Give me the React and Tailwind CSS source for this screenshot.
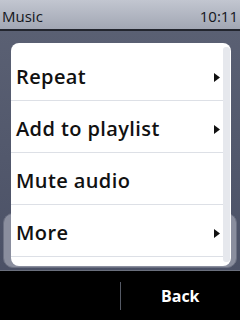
import { useState } from "react";

const items = [
  { label: "Repeat", sub: true },
  { label: "Add to playlist", sub: true },
  { label: "Mute audio", sub: false },
  { label: "More", sub: true },
];

const Arrow = () => (
  <svg width="6" height="9" viewBox="0 0 6 9">
    <path d="M0 0 L6 4.5 L0 9 Z" fill="#111" />
  </svg>
);

const App = () => {
  const [active] = useState(null);

  return (
    <div
      className="w-[240px] h-[320px] flex flex-col overflow-hidden bg-[#535a6d]"
      style={{ fontFamily: '"Open Sans", sans-serif' }}
    >
      {/* STATUS BAR */}
      <div className="h-[29px] shrink-0 flex items-center justify-between px-[2px] pt-[3px] bg-gradient-to-b from-[#c2c6d0] to-[#a2a7b4] text-[#14161c] text-[15px]">
        <span>Music</span>
        <span>10:11</span>
      </div>
      <div className="h-[2px] shrink-0 bg-[#22252e]" />

      {/* CONTENT */}
      <div className="relative flex-1 bg-gradient-to-b from-[#5a6073] to-[#4b5166]">
        {/* frame behind bottom of menu */}
        <div className="absolute left-[3px] right-[3px] top-[182px] bottom-[2px] rounded-[10px] bg-[#8a8e9e] border border-[#6b7082]" />

        <div className="absolute left-[11px] top-[12px] w-[220px] h-[223px] rounded-[8px] bg-white flex">
          <div className="flex-1 flex flex-col pt-[6px]">
            {items.map((it, i) => (
              <div
                key={it.label}
                className={`h-[52px] flex items-center justify-between pt-[5px] pl-[5px] pr-[3px] border-b border-[#dde0e6] ${active === i ? "bg-gray-100" : ""}`}
              >
                <span className="text-[20px] font-semibold text-[#111] tracking-[0.4px]">
                  {it.label}
                </span>
                {it.sub && <Arrow />}
              </div>
            ))}
          </div>
          <div className="w-[7px] my-[4px] mr-[1px] rounded-[3px] bg-[#e6e8ed]" />
        </div>
      </div>

      {/* SOFTKEYS */}
      <div className="h-[50px] shrink-0 bg-black border-t border-[#6a6f7c] flex items-center">
        <div className="flex-1" />
        <div className="w-px h-[28px] bg-[#555a66]" />
        <div className="flex-1 flex justify-center">
          <span className="text-white text-[16px] font-bold">Back</span>
        </div>
      </div>
    </div>
  );
};

export default App;
